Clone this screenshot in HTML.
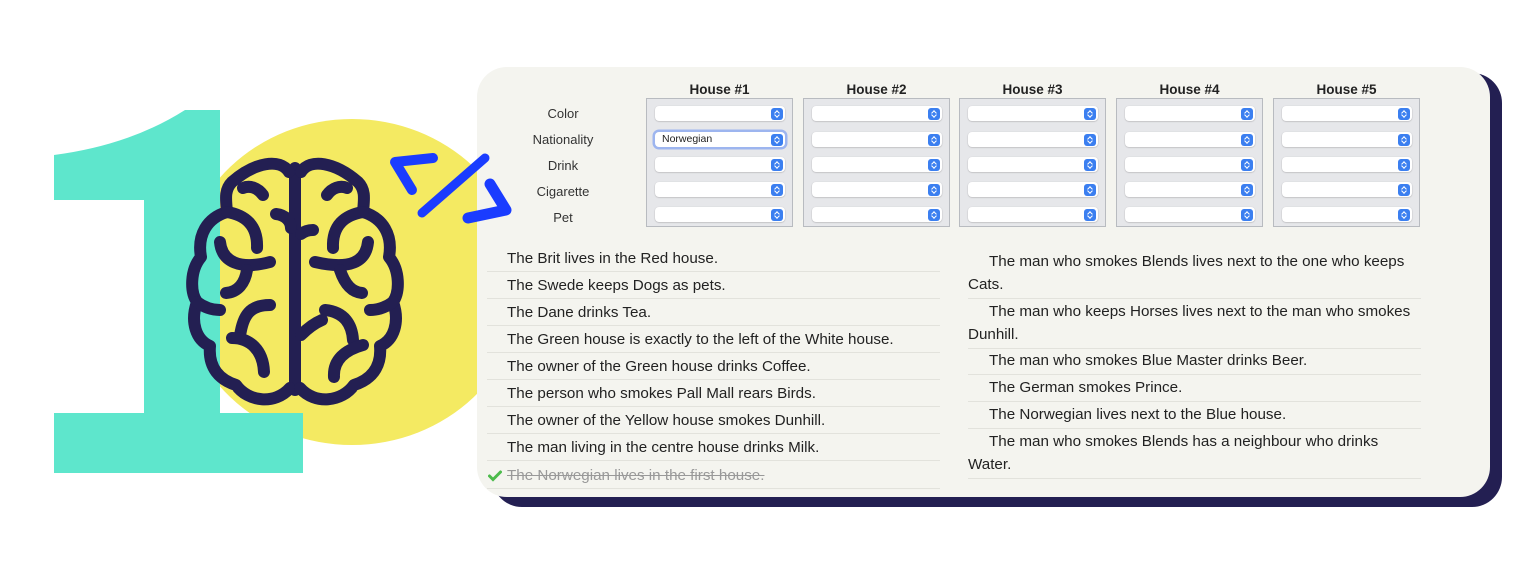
<!DOCTYPE html>
<html><head><meta charset="utf-8"><style>
*{margin:0;padding:0;box-sizing:border-box}
body{width:1534px;height:574px;background:#fff;position:relative;overflow:hidden;font-family:"Liberation Sans",Arial,sans-serif;color:#222}
.shadow{position:absolute;left:492px;top:73px;width:1010px;height:434px;background:#231f52;border-radius:30px}
.panel{position:absolute;left:477px;top:67px;width:1013px;height:430px;background:#f4f4ef;border-radius:30px}
.hdr{position:absolute;top:82px;width:147px;text-align:center;font-weight:bold;font-size:13.5px;color:#222}
.lbl{position:absolute;left:503px;width:120px;text-align:center;font-size:13px;color:#333}
.box{position:absolute;top:98px;width:147px;height:129px;background:#e6e7ea;border:1px solid #b8bbc0}
.sel{position:absolute;left:8px;width:130px;height:15px;background:#fff;border-radius:4px;box-shadow:0 0.5px 1.5px rgba(0,0,0,.25)}
.sel i{position:absolute;right:2px;top:1.5px;width:12px;height:12px;border-radius:3px;background:#3b7ff0}
.sel i:before,.sel i:after{content:"";position:absolute;left:4px;width:3px;height:3px;border-left:1px solid #fff;border-top:1px solid #fff}
.sel i:before{top:3px;transform:rotate(45deg)}
.sel i:after{top:5px;transform:rotate(225deg)}
.sel.f{box-shadow:0 0 0 2.5px #9db5ef;}
.sel span{position:absolute;left:7px;top:1px;font-size:10.5px;color:#222}
.row{position:absolute;left:487px;width:453px;height:27px;border-bottom:1px solid #e2e2dc;font-size:15.2px;line-height:27px;padding-left:20px;white-space:nowrap}
.r2{position:absolute;left:968px;width:453px;border-bottom:1px solid #e2e2dc;font-size:15.2px;line-height:23px;text-indent:21px;padding:2px 0}
</style></head><body>
<svg width="520" height="520" style="position:absolute;left:0;top:0">
<ellipse cx="352" cy="282" rx="172" ry="163" fill="#f4ea62"/>
<path d="M54,155 Q130,145 185,110 L220,110 L220,413 L303,413 L303,473 L54,473 L54,413 L144,413 L144,200 L54,200 Z" fill="#5ee6cc"/>
<g fill="none" stroke="#231f52" stroke-width="12" stroke-linecap="round" stroke-linejoin="round">
<path d="M295,168 L295,390"/>
<path d="M289,172 C280,158 255,162 232,182 C224,190 226,200 227,212 C207,218 197,235 201,257 C190,270 190,292 197,302 C190,322 196,340 210,346 C208,368 220,380 236,385 C248,402 275,405 290,388"/>
<path d="M301,172 C310,158 335,162 358,182 C366,190 364,200 363,212 C383,218 393,235 389,257 C400,270 400,292 393,302 C400,322 394,340 380,346 C382,368 370,380 354,385 C342,402 315,405 300,388"/>
<path d="M263,195 C258,188 250,185 243,188"/><path d="M227,212 C245,215 258,225 257,248"/>
<path d="M276,214 C286,215 291,222 291,228"/><path d="M220,242 C222,262 240,270 270,262"/>
<path d="M247,270 C245,283 238,292 226,293"/><path d="M197,302 C205,308 212,310 220,310"/>
<path d="M270,305 C250,305 243,315 240,336"/><path d="M232,338 C250,338 263,350 264,372"/>
<path d="M327,195 C332,188 340,185 347,188"/><path d="M363,212 C345,215 332,225 333,248"/>
<path d="M301,234 C306,230 311,230 313,230"/><path d="M368,242 C366,262 350,270 315,262"/>
<path d="M340,270 C345,285 352,292 362,293"/><path d="M393,302 C385,308 378,310 370,310"/>
<path d="M325,310 C345,312 352,325 353,340"/><path d="M301,335 C308,328 315,323 322,320"/>
<path d="M363,345 C345,350 333,360 334,377"/>
</g>
</svg>
<div class="shadow"></div>
<div class="panel"></div>
<svg width="520" height="520" style="position:absolute;left:0;top:0">
<g fill="none" stroke="#1a3cff" stroke-linecap="round" stroke-linejoin="round">
<path d="M433,158 L395,162 L412,190" stroke-width="10"/>
<path d="M485,158 L422,213" stroke-width="9"/>
<path d="M490,184 L506,210 L468,218" stroke-width="11"/>
</g>
</svg>
<div class="hdr" style="left:646px">House #1</div><div class="hdr" style="left:803px">House #2</div><div class="hdr" style="left:959px">House #3</div><div class="hdr" style="left:1116px">House #4</div><div class="hdr" style="left:1273px">House #5</div>
<div class="lbl" style="top:106px">Color</div><div class="lbl" style="top:132px">Nationality</div><div class="lbl" style="top:158px">Drink</div><div class="lbl" style="top:184px">Cigarette</div><div class="lbl" style="top:210px">Pet</div>
<div id="boxes"></div>
<script>
var xs=[646,803,959,1116,1273],ys=[7,33,58,83,108],h='';
xs.forEach(function(x,i){h+='<div class="box" style="left:'+x+'px">';ys.forEach(function(y,j){var f=(i==0&&j==1);h+='<div class="sel'+(f?' f':'')+'" style="top:'+y+'px">'+(f?'<span>Norwegian</span>':'')+'<i></i></div>';});h+='</div>';});
document.getElementById('boxes').innerHTML=h;
</script>
<div class="row" style="top:245px">The Brit lives in the Red house.</div>
<div class="row" style="top:272px">The Swede keeps Dogs as pets.</div>
<div class="row" style="top:299px">The Dane drinks Tea.</div>
<div class="row" style="top:326px">The Green house is exactly to the left of the White house.</div>
<div class="row" style="top:353px">The owner of the Green house drinks Coffee.</div>
<div class="row" style="top:380px">The person who smokes Pall Mall rears Birds.</div>
<div class="row" style="top:407px">The owner of the Yellow house smokes Dunhill.</div>
<div class="row" style="top:434px">The man living in the centre house drinks Milk.</div>
<div class="row" style="top:462px;color:#999;text-decoration:line-through">The Norwegian lives in the first house.</div>
<svg width="14" height="12" style="position:absolute;left:488px;top:470px"><path d="M1.5,6 L5,9.5 L12.5,2" fill="none" stroke="#4cbb4c" stroke-width="3" stroke-linecap="round"/></svg>
<div class="r2" style="top:248px">The man who smokes Blends lives next to the one who keeps Cats.</div>
<div class="r2" style="top:298px">The man who keeps Horses lives next to the man who smokes Dunhill.</div>
<div class="r2" style="top:347px">The man who smokes Blue Master drinks Beer.</div>
<div class="r2" style="top:374px">The German smokes Prince.</div>
<div class="r2" style="top:401px">The Norwegian lives next to the Blue house.</div>
<div class="r2" style="top:428px">The man who smokes Blends has a neighbour who drinks Water.</div>
</body></html>
